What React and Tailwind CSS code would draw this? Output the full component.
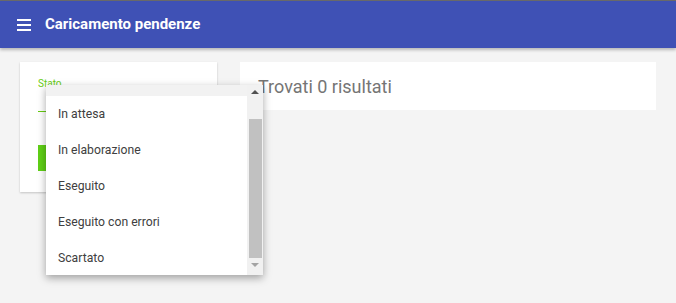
import React from "react";

const stati = ["In attesa", "In elaborazione", "Eseguito", "Eseguito con errori", "Scartato"];

export default function App() {
    return (
        <div className="relative h-[303px] w-[676px] overflow-hidden bg-[#f4f4f4]" style={{ fontFamily: "Roboto, 'Liberation Sans', sans-serif" }}>
            <div className="h-px bg-[#6b6b6b]" />
            <header className="flex h-[47px] items-center bg-[#3f51b5] pl-[17px] shadow-[0_2px_3px_rgba(0,0,0,0.25)]">
                <div className="flex w-[14px] flex-col gap-[3px]">
                    <span className="h-[2px] bg-white" />
                    <span className="h-[2px] bg-white" />
                    <span className="h-[2px] bg-white" />
                </div>
                <h1 className="ml-[14px] text-[15px] font-bold text-white">Caricamento pendenze</h1>
            </header>

            <div className="flex items-start gap-[23px] px-[20px] pt-[14px]">
                <div className="h-[130px] w-[197px] bg-white px-[18px] pt-[17px] shadow-[0_1px_2px_rgba(0,0,0,0.2)]">
                    <div className="text-[10px] leading-[10px] text-[#66cc11]">Stato</div>
                    <div className="mt-[22px] h-px bg-[#66cc11]" />
                    <div className="mt-[33px] h-[26px] w-[160px] bg-[#5fd016]" />
                </div>
                <div className="flex h-[48px] flex-1 items-center bg-white pl-[18px] text-[18px] text-[#757575]">
                    Trovati 0 risultati
                </div>
            </div>

            <div className="absolute left-[46px] top-[85px] flex h-[190px] w-[217px] bg-white shadow-[0_3px_8px_rgba(0,0,0,0.35)]">
                <ul className="flex-1">
                    <li className="h-[11px] bg-[#f2f2f2]" />
                    {stati.map((s) => (
                        <li key={s} className="flex h-[36px] items-center pl-[12px] text-[12.2px] text-[#404040]">{s}</li>
                    ))}
                </ul>
                <div className="flex w-[16px] flex-col items-center bg-[#f1f1f1]">
                    <div className="flex h-[14px] items-center">
                        <span className="h-0 w-0 border-x-[4px] border-b-[4px] border-x-transparent border-b-[#505050]" />
                    </div>
                    <div className="mt-[20px] h-[139px] w-[13px] bg-[#c1c1c1]" />
                    <div className="flex h-[14px] items-center">
                        <span className="h-0 w-0 border-x-[4px] border-t-[4px] border-x-transparent border-t-[#a3a3a3]" />
                    </div>
                </div>
            </div>
        </div>
    );
}
